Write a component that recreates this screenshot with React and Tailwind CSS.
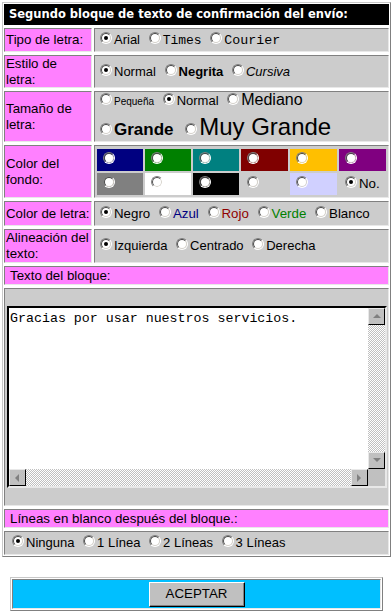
import React from "react";

const inset = "border border-t-[#808080] border-l-[#808080] border-r-[#e8e8e8] border-b-[#e8e8e8]";

function Radio({ checked }) {
  return (
    <span className="inline-block overflow-hidden align-baseline w-[12px] h-[12px] rounded-full border border-t-[#808080] border-l-[#808080] border-r-white border-b-white ml-[5px] mr-[2px]">
      <span className="flex w-full h-full items-center justify-center rounded-full bg-white border border-t-[#404040] border-l-[#404040] border-r-[#d4d0c8] border-b-[#d4d0c8]">
        {checked ? <span className="block w-[4px] h-[4px] rounded-full bg-black" /> : null}
      </span>
    </span>
  );
}

function Opt({ checked, children, className = "" }) {
  return (
    <span className="whitespace-nowrap">
      <Radio checked={checked} />
      <span className={className}>{children}</span>
    </span>
  );
}

function Label({ children, h }) {
  return (
    <div className={`w-[88px] shrink-0 bg-[#ff80ff] ${inset} px-[1px] flex items-center text-[13.3px] leading-[16px] text-black ${h}`}>
      <span>{children}</span>
    </div>
  );
}

function Content({ children, h, className = "" }) {
  return (
    <div className={`flex-1 bg-[#cccccc] ${inset} flex items-center ${h} ${className}`}>{children}</div>
  );
}

function Swatch({ color, checked, children }) {
  return (
    <div className={`h-[22px] flex items-center pl-[6px] ${color}`}>
      <span className="leading-[16px] text-[13.3px]">
        <span className="inline-block -ml-[5px]">
          <Radio checked={checked} />
        </span>
        {children}
      </span>
    </div>
  );
}

function Arrow({ dir }) {
  const pts = {
    up: "1,6 5,2 9,6",
    down: "1,2 5,6 9,2",
    left: "6,1 2,5 6,9",
    right: "2,1 6,5 2,9",
  }[dir];
  return (
    <svg width="10" height="10" viewBox="0 0 10 10">
      <polygon points={pts} fill="#808080" />
    </svg>
  );
}

function SBtn({ dir }) {
  return (
    <div className="w-[17px] h-[17px] shrink-0 bg-[#c0c0c0] border border-t-[#e8e8e8] border-l-[#e8e8e8] border-r-black border-b-black flex items-center justify-center">
      <Arrow dir={dir} />
    </div>
  );
}

const checker = "bg-[repeating-conic-gradient(#c0c0c0_0_25%,#ffffff_0_50%)] bg-[length:2px_2px]";

export default function App() {
  return (
    <div className="bg-white min-h-[613px] w-[392px] pt-[2px] font-['Liberation_Sans',Arial,sans-serif] text-black">
      <div className="ml-[2px] w-[389px] border border-t-[#c8c8c8] border-l-[#c8c8c8] border-r-[#808080] border-b-[#808080] p-[1px] flex flex-col gap-[3px]">
        <div className="h-[21px] bg-black flex items-center pl-[5px]">
          <span className="text-white font-bold text-[11.5px] font-['DejaVu_Sans',Verdana,sans-serif]">
            Segundo bloque de texto de confirmación del envío:
          </span>
        </div>

        <div className="flex gap-[2px]">
          <Label h="h-[24px]">Tipo de letra:</Label>
          <Content h="h-[24px]">
            <div className="text-[13px] leading-[16px]">
              <Opt checked>Arial</Opt>{" "}
              <Opt className="font-['Liberation_Mono',monospace] text-[13px]">Times</Opt>{" "}
              <Opt className="font-['Liberation_Mono',monospace] text-[13.3px]">Courier</Opt>
            </div>
          </Content>
        </div>

        <div className="flex gap-[2px]">
          <Label h="h-[33px]">Estilo de letra:</Label>
          <Content h="h-[33px]">
            <div className="text-[13px] leading-[16px]">
              <Opt checked>Normal</Opt>{" "}
              <Opt className="font-bold">Negrita</Opt>{" "}
              <Opt className="italic">Cursiva</Opt>
            </div>
          </Content>
        </div>

        <div className="flex gap-[2px]">
          <Label h="h-[51px]">Tamaño de letra:</Label>
          <Content h="h-[51px]" className="flex-col !items-start justify-center">
            <div className="text-[13px] leading-[22px]">
              <Opt className="text-[10px]">Pequeña</Opt>{" "}
              <Opt checked>Normal</Opt>{" "}
              <Opt className="text-[16px]">Mediano</Opt>
            </div>
            <div className="text-[13px] leading-[27px]">
              <Opt className="text-[17px] font-bold">Grande</Opt>{" "}
              <span className="ml-[3px]" />
              <Opt className="text-[24px]">Muy Grande</Opt>
            </div>
          </Content>
        </div>

        <div className="flex gap-[2px]">
          <Label h="h-[53px]">Color del fondo:</Label>
          <Content h="h-[53px]" className="pl-[2px]">
            <div className="grid grid-cols-[46px_46px_46px_47px_47px_47px] gap-[2px]">
              <Swatch color="bg-[#000080]" />
              <Swatch color="bg-[#008000]" />
              <Swatch color="bg-[#008080]" />
              <Swatch color="bg-[#800000]" />
              <Swatch color="bg-[#ffbf00]" />
              <Swatch color="bg-[#800080]" />
              <Swatch color="bg-[#808080]" />
              <Swatch color="bg-white" />
              <Swatch color="bg-black" />
              <Swatch color="bg-[#cccccc]" />
              <Swatch color="bg-[#d0d0ff]" />
              <Swatch color="bg-[#cccccc]" checked>No.</Swatch>
            </div>
          </Content>
        </div>

        <div className="flex gap-[2px]">
          <Label h="h-[25px]">Color de letra:</Label>
          <Content h="h-[25px]">
            <div className="text-[13.3px] leading-[16px]">
              <Opt checked>Negro</Opt>{" "}
              <Opt className="text-[#000080]">Azul</Opt>{" "}
              <Opt className="text-[#900000]">Rojo</Opt>{" "}
              <Opt className="text-[#008000]">Verde</Opt>{" "}
              <Opt>Blanco</Opt>
            </div>
          </Content>
        </div>

        <div className="flex gap-[2px]">
          <Label h="h-[34px]">Alineación del texto:</Label>
          <Content h="h-[34px]">
            <div className="text-[13px] leading-[16px]">
              <Opt checked>Izquierda</Opt>{" "}
              <Opt>Centrado</Opt>{" "}
              <Opt>Derecha</Opt>
            </div>
          </Content>
        </div>

        <div className={`h-[19px] bg-[#ff80ff] ${inset} flex items-center pl-[5px] text-[13.3px]`}>
          Texto del bloque:
        </div>

        <div className={`h-[218px] bg-[#cccccc] ${inset} pt-[17px] pl-[2px] pr-[1px]`}>
          <div className="h-[182px] border-2 border-t-black border-l-black border-r-[#e8e8e8] border-b-[#e8e8e8] flex flex-col">
            <div className="flex flex-1 min-h-0">
              <div className="flex-1 bg-white pl-[1px] pt-[3px] font-['Liberation_Mono',monospace] text-[13.3px] leading-[15px] whitespace-pre">
                Gracias por usar nuestros servicios.
              </div>
              <div className={`w-[17px] flex flex-col justify-between ${checker}`}>
                <SBtn dir="up" />
                <SBtn dir="down" />
              </div>
            </div>
            <div className="flex h-[17px]">
              <div className={`flex-1 flex justify-between ${checker}`}>
                <SBtn dir="left" />
                <SBtn dir="right" />
              </div>
              <div className="w-[17px] h-[17px] bg-[#c0c0c0]" />
            </div>
          </div>
        </div>

        <div className={`h-[19px] bg-[#ff80ff] ${inset} flex items-center pl-[5px] text-[13.3px]`}>
          Líneas en blanco después del bloque.:
        </div>

        <div className={`h-[24px] bg-[#cccccc] ${inset} flex items-center pl-[2px]`}>
          <div className="text-[13px] leading-[16px]">
            <Opt checked>Ninguna</Opt>{" "}
            <Opt>1 Línea</Opt>{" "}
            <Opt>2 Líneas</Opt>{" "}
            <Opt>3 Líneas</Opt>
          </div>
        </div>
      </div>

      <div className="mt-[20px] ml-[10px] w-[373px] h-[34px] border border-t-[#c8c8c8] border-l-[#c8c8c8] border-r-[#808080] border-b-[#808080] p-[1px]">
        <div className={`h-full bg-[#00bfff] ${inset} flex items-center justify-center`}>
          <div className="w-[96px] h-[25px] bg-[#c0c0c0] border border-t-white border-l-white border-r-black border-b-black flex items-center justify-center shadow-[inset_-1px_-1px_0_#808080]">
            <span className="text-[13.3px] leading-[16px]">ACEPTAR</span>
          </div>
        </div>
      </div>
    </div>
  );
}
